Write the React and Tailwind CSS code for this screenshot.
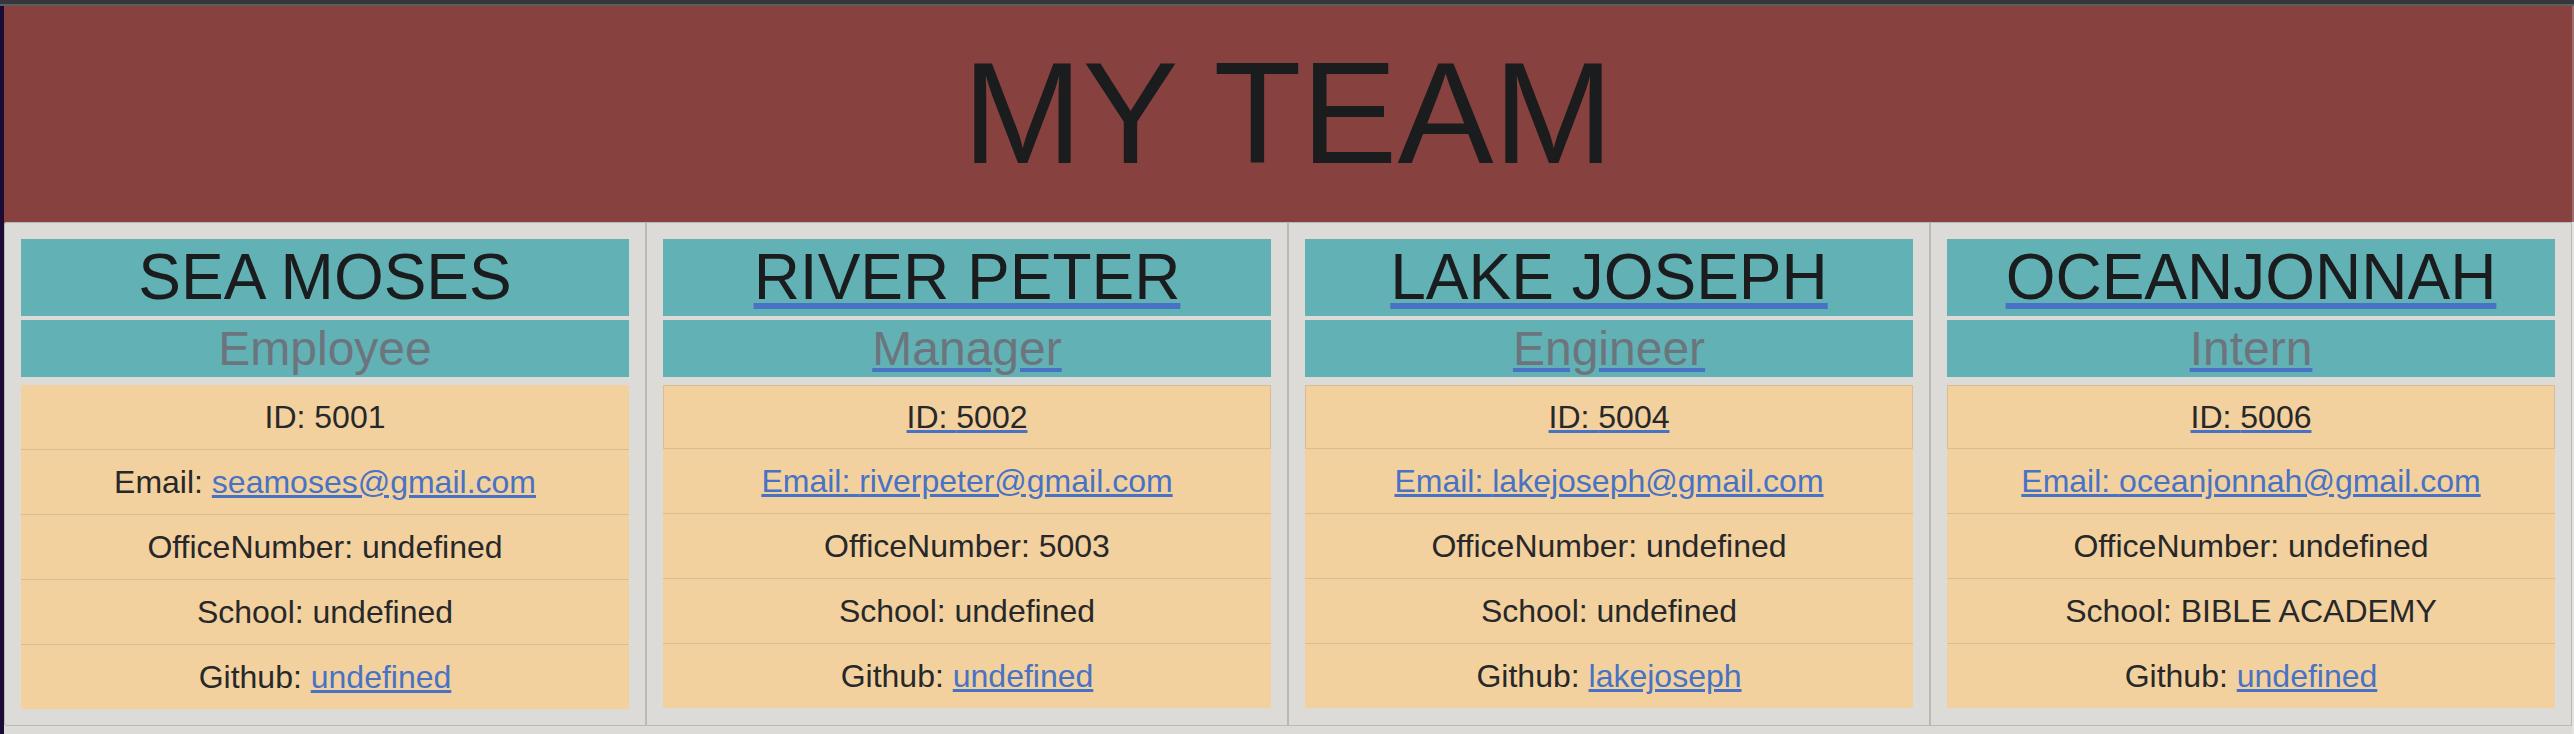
import React from "react";

const cards = [
  {
    name: "SEA MOSES",
    role: "Employee",
    id: "5001",
    email: "seamoses@gmail.com",
    office: "undefined",
    school: "undefined",
    github: "undefined",
    linked: false,
  },
  {
    name: "RIVER PETER",
    role: "Manager",
    id: "5002",
    email: "riverpeter@gmail.com",
    office: "5003",
    school: "undefined",
    github: "undefined",
    linked: true,
  },
  {
    name: "LAKE JOSEPH",
    role: "Engineer",
    id: "5004",
    email: "lakejoseph@gmail.com",
    office: "undefined",
    school: "undefined",
    github: "lakejoseph",
    linked: true,
  },
  {
    name: "OCEANJONNAH",
    role: "Intern",
    id: "5006",
    email: "oceanjonnah@gmail.com",
    office: "undefined",
    school: "BIBLE ACADEMY",
    github: "undefined",
    linked: true,
  },
];

function Card({ c, first }) {
  const ul = c.linked ? "underline decoration-[#4872c4]" : "";
  return (
    <div
      className={
        "flex-1 min-w-0 border border-[#b9b9b9] p-4 " +
        (first ? "rounded-tl-[3px] rounded-bl-[3px]" : "")
      }
    >
      <div className="h-[77px] bg-[#62b1b4] text-center text-[64px] leading-[77px] text-[#1a1c1d] whitespace-nowrap">
        <span className={ul}>{c.name}</span>
      </div>
      <div className="mt-[4px] h-[57px] bg-[#62b1b4] text-center text-[48px] leading-[57px] text-[#6c757d] whitespace-nowrap">
        <span className={ul}>{c.role}</span>
      </div>
      <div className="mt-[8px] bg-[#f3d19e] text-center text-[32px] leading-[40px] text-[#272829]">
        <div
          className={
            c.linked
              ? "border border-[#d9bd92] pt-[11px] pb-[11px]"
              : "border-b border-[#d9bd92] py-3"
          }
        >
          <span className={ul}>ID: {c.id}</span>
        </div>
        <div className="border-b border-[#d9bd92] py-3 whitespace-nowrap">
          {c.linked ? (
            <a href="#" className="text-[#4872c4] underline">
              Email: {c.email}
            </a>
          ) : (
            <>
              Email:{" "}
              <a href="#" className="text-[#4872c4] underline">
                {c.email}
              </a>
            </>
          )}
        </div>
        <div className="border-b border-[#d9bd92] py-3 whitespace-nowrap">
          OfficeNumber: {c.office}
        </div>
        <div className="border-b border-[#d9bd92] py-3 whitespace-nowrap">
          School: {c.school}
        </div>
        <div className="py-3 whitespace-nowrap">
          Github:{" "}
          <a href="#" className="text-[#4872c4] underline">
            {c.github}
          </a>
        </div>
      </div>
    </div>
  );
}

export default function App() {
  return (
    <div className="w-[2574px] h-[734px] overflow-hidden bg-[#dcdbd7] font-['Liberation_Sans',Arial,sans-serif]">
      <div className="h-[4px] bg-[#36373b]" />
      <div className="h-[2px] bg-[#5e5e5e]" />
      <div className="flex h-[728px]">
        <div className="w-[4px] bg-[#1b0c36]" />
        <div className="flex-1 min-w-0 flex flex-col bg-[#87413f]">
          <header className="h-[216px] flex items-center justify-center">
            <h1 className="text-[144px] leading-none text-[#1a1c1d] font-normal">
              MY TEAM
            </h1>
          </header>
          <div className="flex-1 bg-[#dcdbd7] rounded-tl-[3px]">
            <div className="flex">
              {cards.map((c, i) => (
                <Card key={c.id} c={c} first={i === 0} />
              ))}
            </div>
          </div>
        </div>
        <div className="w-[2px] flex flex-col">
          <div className="h-[216px] bg-[#a0706e]" />
          <div className="flex-1 bg-[#e4e3e0]" />
        </div>
      </div>
    </div>
  );
}
